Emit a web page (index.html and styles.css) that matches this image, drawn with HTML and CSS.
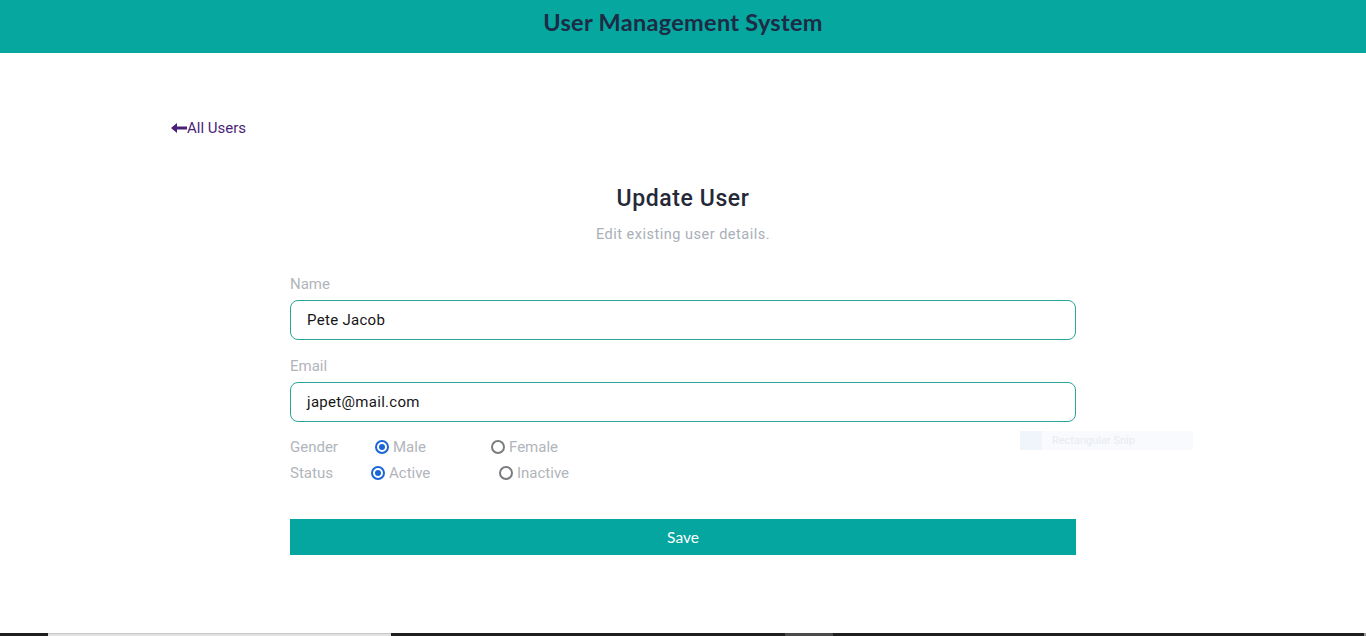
FILE: index.html
```html
<!DOCTYPE html>
<html lang="en">
<head>
<meta charset="utf-8">
<title>User Management System</title>
<link rel="stylesheet" href="styles.css">
</head>
<body>
<div class="page">
  <header class="topbar">
    <h1 class="brand">User Management System</h1>
  </header>
  <main class="content">
    <a class="back" href="#"><svg class="arrow" width="16" height="10" viewBox="0 0 16 10" aria-hidden="true"><path d="M0 5 L6 0 L6 3.6 L16 3.6 L16 6.4 L6 6.4 L6 10 Z" fill="#4b1e78"/></svg>All Users</a>
    <section class="card">
      <h2 class="title">Update User</h2>
      <p class="subtitle">Edit existing user details.</p>
      <form class="form">
        <label class="label">Name</label>
        <div class="input">Pete Jacob</div>
        <label class="label email-label">Email</label>
        <div class="input">japet@mail.com</div>
        <div class="choices">
          <div class="row">
            <span class="row-label gender">Gender</span>
            <span class="opt opt-male"><span class="radio on"></span>Male</span>
            <span class="opt"><span class="radio"></span>Female</span>
          </div>
          <div class="row">
            <span class="row-label status">Status</span>
            <span class="opt opt-active"><span class="radio on"></span>Active</span>
            <span class="opt"><span class="radio"></span>Inactive</span>
          </div>
        </div>
        <div class="save">Save</div>
      </form>
      <div class="ghost"><span class="ghost-icon"></span><span class="ghost-text">Rectangular Snip</span></div>
    </section>
  </main>
  <div class="taskbar">
    <span class="tb dark"></span>
    <span class="tb light"></span>
    <span class="tb dark"></span>
    <span class="tb mid"></span>
    <span class="tb dark"></span>
    <span class="tb edge"></span>
  </div>
</div>
</body>
</html>
```

FILE: styles.css
```css
* { box-sizing: border-box; }
html, body { margin: 0; padding: 0; }
body {
  font-family: Roboto, "Liberation Sans", sans-serif;
  background: #ffffff;
  color: #1a1a1a;
}
.page {
  height: 100vh;
  display: flex;
  flex-direction: column;
  overflow: hidden;
}
.topbar {
  height: 53px;
  flex: 0 0 53px;
  background: #05a79f;
  display: flex;
  justify-content: center;
  align-items: center;
}
.brand {
  margin: 0 0 9px 0;
  font-family: Lato, "Open Sans", sans-serif;
  font-weight: 700;
  font-size: 23.5px;
  letter-spacing: 0.3px;
  color: #1e2b45;
}
.content {
  flex: 1 1 auto;
  padding: 0 171px;
  display: flex;
  flex-direction: column;
}
.back {
  margin-top: 65px;
  align-self: flex-start;
  font-size: 15px;
  line-height: 20px;
  color: #4b1e78;
  text-decoration: none;
  display: flex;
  align-items: center;
}
.arrow {
  display: block;
  margin-right: 0;
  margin-top: -1px;
}
.card {
  position: relative;
  width: 786px;
  align-self: center;
  margin-top: 47px;
  display: flex;
  flex-direction: column;
}
.title {
  margin: 0;
  text-align: center;
  font-size: 23px;
  line-height: 28px;
  font-weight: 500;
  letter-spacing: 0.6px;
  color: #252837;
}
.subtitle {
  margin: 12px 0 0 0;
  text-align: center;
  font-size: 14.5px;
  line-height: 20px;
  letter-spacing: 0.5px;
  color: #a9afb7;
}
.form {
  margin-top: 28px;
  display: flex;
  flex-direction: column;
}
.label {
  font-size: 15px;
  line-height: 20px;
  margin-top: 1px;
  margin-bottom: -1px;
  color: #b1b5bb;
}
.email-label { margin-top: 16px; }
.input {
  margin-top: 7px;
  height: 40px;
  border: 1px solid #2aa39b;
  border-radius: 8px;
  padding: 0 16px;
  display: flex;
  align-items: center;
  font-size: 15px;
  letter-spacing: 0.3px;
  color: #161616;
}
.choices {
  margin-top: 15px;
  display: flex;
  flex-direction: column;
  gap: 6px;
}
.row {
  display: flex;
  align-items: center;
  font-size: 15px;
  line-height: 20px;
  color: #b1b5bb;
}
.row-label.gender { width: 85px; }
.row-label.status { width: 81px; }
.opt {
  display: flex;
  align-items: center;
}
.opt-male { width: 116px; }
.opt-active { width: 128px; }
.radio {
  width: 14px;
  height: 14px;
  border: 2px solid #7c7c80;
  border-radius: 50%;
  margin-right: 4px;
  display: flex;
  align-items: center;
  justify-content: center;
}
.radio.on { border-color: #1a66d6; }
.radio.on::after {
  content: "";
  width: 6px;
  height: 6px;
  border-radius: 50%;
  background: #1a66d6;
}
.save {
  margin-top: 36px;
  height: 36px;
  background: #05a69f;
  color: #ffffff;
  display: flex;
  align-items: center;
  justify-content: center;
  font-family: Lato, "Open Sans", sans-serif;
  font-size: 15.5px;
}
.ghost {
  position: absolute;
  left: 730px;
  top: 246px;
  width: 173px;
  height: 19px;
  background: #f8fafd;
  display: flex;
  align-items: center;
}
.ghost-icon {
  width: 22px;
  height: 19px;
  background: #f0f4fb;
}
.ghost-text {
  margin-left: 10px;
  font-size: 11px;
  color: #e8ebf0;
}
.taskbar {
  flex: 0 0 3px;
  height: 3px;
  display: grid;
  grid-template-columns: 48px 343px 394px 48px 531px 2px;
}
.tb.dark { background: #1f1f1f; }
.tb.light { background: #e2e2e2; border-top: 1px solid #c8c8c8; }
.tb.mid { background: #4a4a4a; }
.tb.edge { background: #9a9a9a; }
```
